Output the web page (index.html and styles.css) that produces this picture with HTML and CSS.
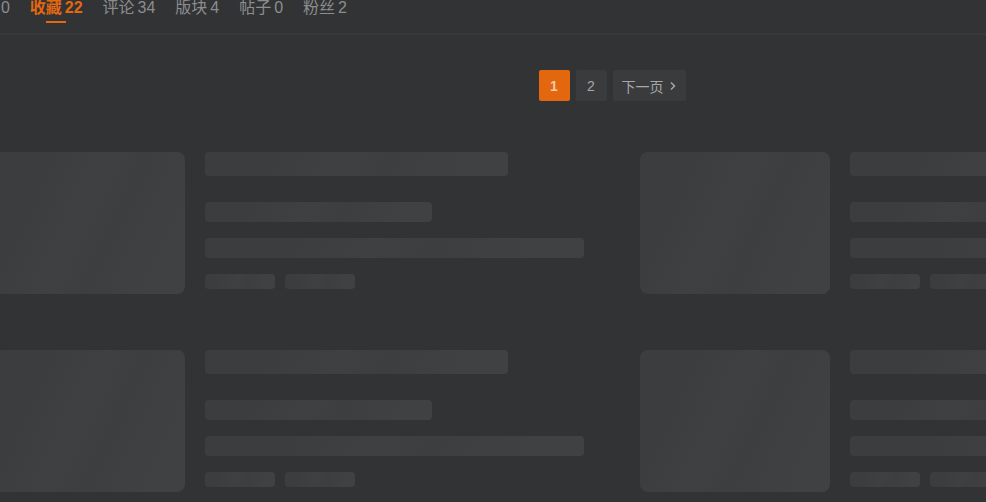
FILE: index.html
```html
<!DOCTYPE html>
<html lang="zh-CN">
<head>
  <meta charset="UTF-8" />
  <title>收藏</title>
  <meta name="viewport" content="width=device-width, initial-scale=1.0" />
  <link rel="stylesheet" href="styles.css">
</head>

<body>

  <nav class="tabs">
    <a class="tab">关注 0</a>
    <a class="tab active">收藏 22</a>
    <a class="tab">评论 34</a>
    <a class="tab">版块 4</a>
    <a class="tab">帖子 0</a>
    <a class="tab">粉丝 2</a>
  </nav>

  <main class="content">
    <div class="pager">
      <span class="page current">1</span>
      <span class="page">2</span>
      <span class="page next">下一页
        <svg width="8" height="10" viewBox="0 0 8 10"><path d="M2 1.5 5.5 5 2 8.5" fill="none" stroke="currentColor" stroke-width="1.5"/></svg>
      </span>
    </div>

    <div class="list">
      <div class="item">
        <div class="thumb sk"></div>
        <div class="lines">
          <div class="sk title"></div>
          <div class="sk short"></div>
          <div class="sk long"></div>
          <div class="tags"><div class="sk tag"></div><div class="sk tag"></div></div>
        </div>
      </div>
      <div class="item">
        <div class="thumb sk"></div>
        <div class="lines">
          <div class="sk title"></div>
          <div class="sk short"></div>
          <div class="sk long"></div>
          <div class="tags"><div class="sk tag"></div><div class="sk tag"></div></div>
        </div>
      </div>
      <div class="item">
        <div class="thumb sk"></div>
        <div class="lines">
          <div class="sk title"></div>
          <div class="sk short"></div>
          <div class="sk long"></div>
          <div class="tags"><div class="sk tag"></div><div class="sk tag"></div></div>
        </div>
      </div>
      <div class="item">
        <div class="thumb sk"></div>
        <div class="lines">
          <div class="sk title"></div>
          <div class="sk short"></div>
          <div class="sk long"></div>
          <div class="tags"><div class="sk tag"></div><div class="sk tag"></div></div>
        </div>
      </div>
    </div>
  </main>

</body>
</html>
```

FILE: styles.css
```css
body {
  font-family: "Liberation Sans", Arial, "Noto Sans CJK SC", sans-serif;
  background: #323335;
  margin: 0;
  padding: 0;
  overflow: hidden;
}

.tabs {
  display: flex;
  gap: 20px;
  height: 33px;
  margin-left: -34px;
  border-bottom: 2px solid #38393b;
}

.tab {
  position: relative;
  font-size: 16px;
  line-height: 16px;
  word-spacing: -1.5px;
  color: #8c8d8f;
  white-space: nowrap;
}

.tab.active {
  color: #e5670f;
  font-weight: bold;
}

.tab.active::after {
  content: "";
  position: absolute;
  left: 16px;
  top: 21px;
  width: 20px;
  height: 2px;
  background: #e5670f;
}

.content {
  width: 1234px;
  margin-left: -5px;
}

.pager {
  display: flex;
  justify-content: center;
  gap: 6px;
  margin-top: 35px;
}

.page {
  display: flex;
  align-items: center;
  justify-content: center;
  min-width: 31px;
  height: 31px;
  border-radius: 2px;
  background: #3a3b3d;
  color: #a6a7a9;
  font-size: 14px;
}

.page.current {
  background: #e2670f;
  color: #f3c9a8;
  font-weight: bold;
}

.page.next {
  padding: 0 9px;
  gap: 5px;
}

.list {
  display: grid;
  grid-template-columns: 589px 589px;
  column-gap: 56px;
  row-gap: 56px;
  margin-top: 51px;
}

.item {
  display: flex;
  gap: 20px;
}

.sk {
  border-radius: 4px;
  background: linear-gradient(115deg, #3c3d3f 20%, #3f4042 45%, #3d3e40 60%, #404143 85%);
}

.thumb {
  width: 190px;
  height: 142px;
  border-radius: 8px;
  flex-shrink: 0;
}

.lines {
  flex: 1;
}

.title {
  width: 303px;
  height: 24px;
}

.short {
  width: 227px;
  height: 20px;
  margin-top: 26px;
}

.long {
  width: 379px;
  height: 20px;
  margin-top: 16px;
}

.tags {
  display: flex;
  gap: 10px;
  margin-top: 16px;
}

.tag {
  width: 70px;
  height: 15px;
}
```
